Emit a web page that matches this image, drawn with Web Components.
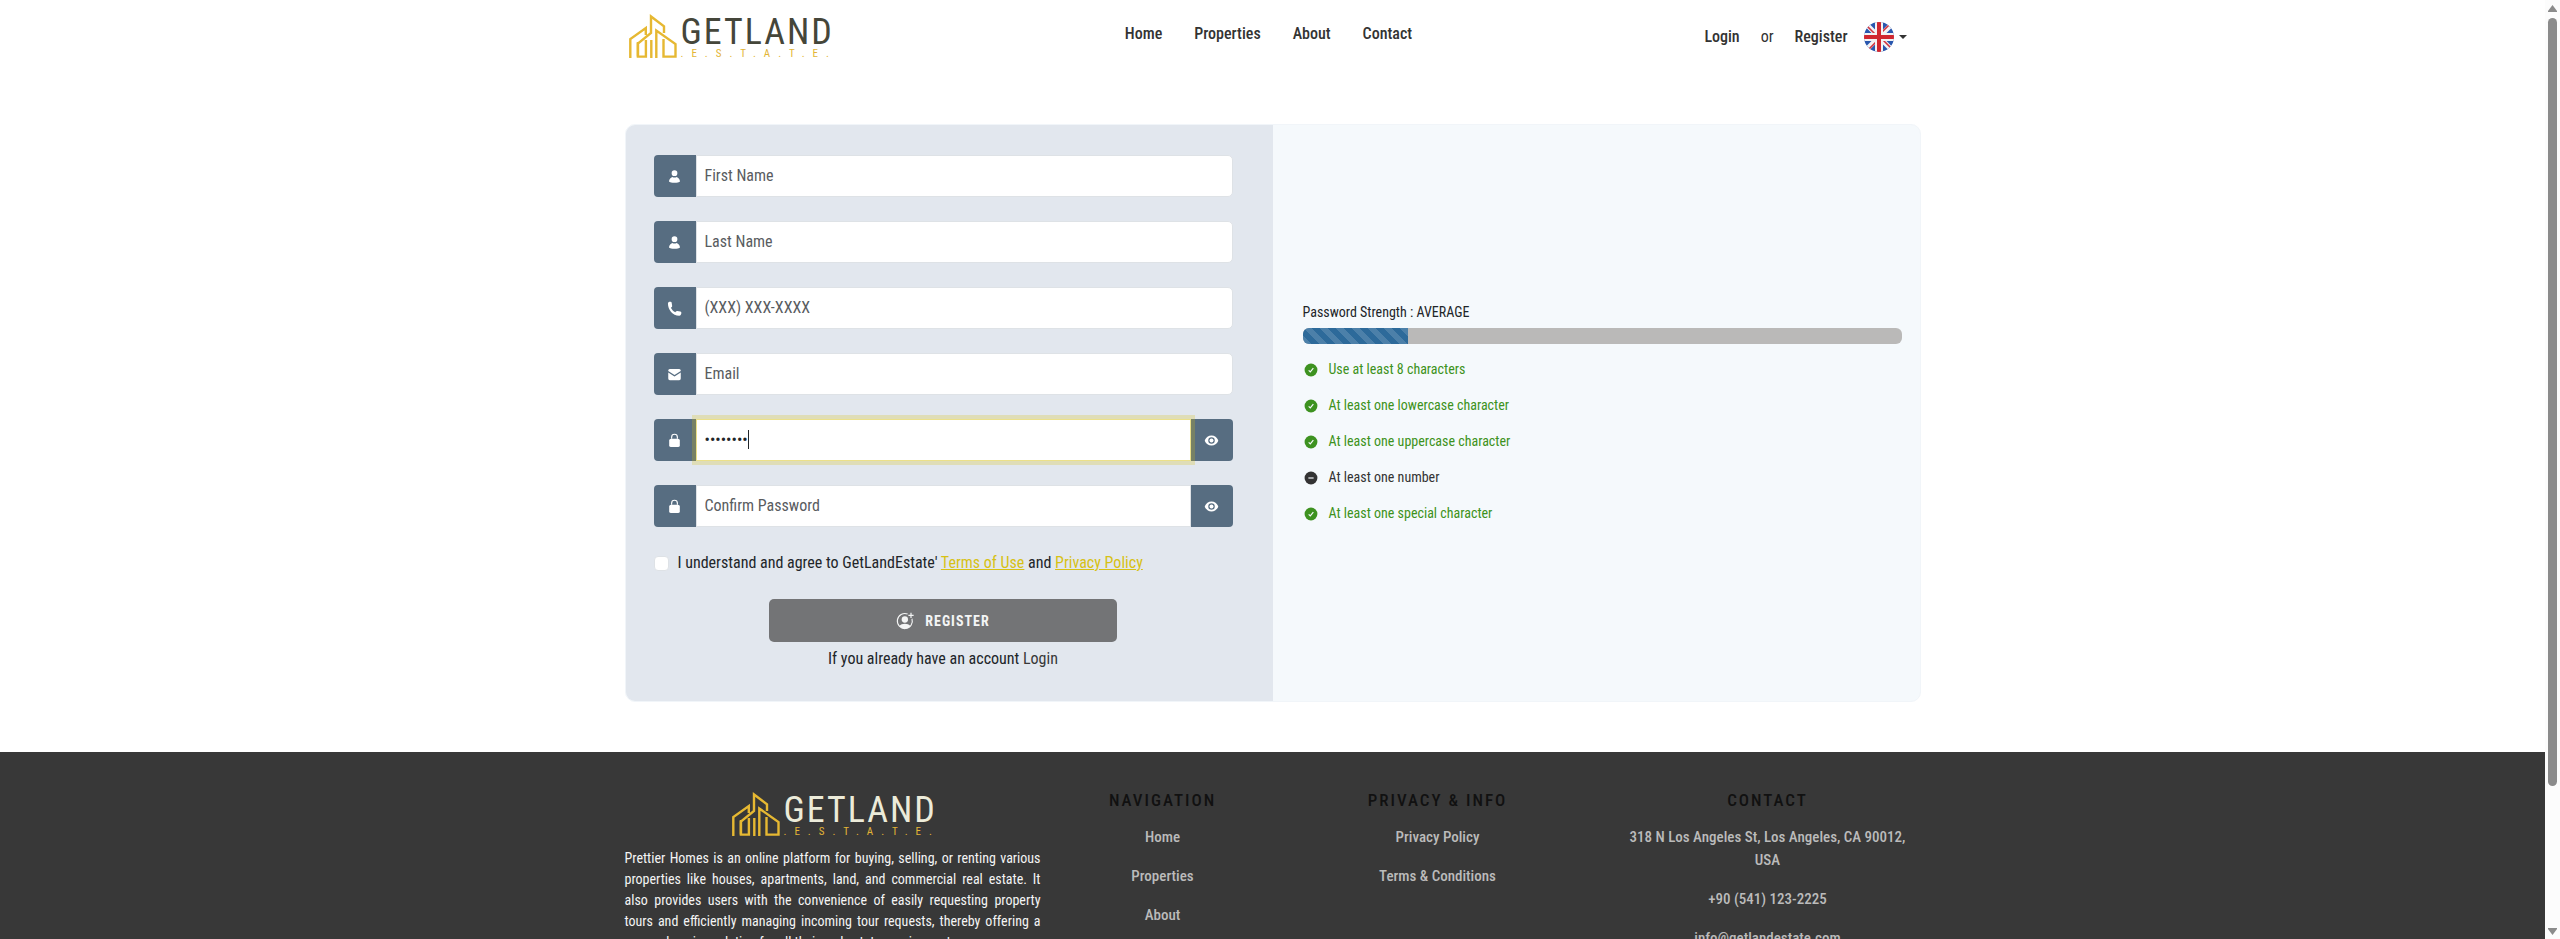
<!DOCTYPE html>
<html lang="en">
<head>
<meta charset="utf-8">
<title>GetLand Estate - Register</title>
<meta name="viewport" content="width=device-width, initial-scale=1">
<style>
  html, body { margin: 0; height: 100%; }
  body {
    font-family: "Roboto Condensed", "Liberation Sans Narrow", Roboto, sans-serif;
    font-size: 16px; line-height: 24px; color: #212529; background: #fff;
  }
</style>
</head>
<body>
<estate-app></estate-app>

<script>
const ICONS = {
  person: '<path d="M12 11.2a4.6 4.6 0 1 0 0-9.2 4.6 4.6 0 0 0 0 9.2zM8.6 12.6C5.400 13.500 3.400 16.500 3.200 20c2 2.800 15.600 2.800 17.600 0-.2-3.500-2.200-6.500-5.400-7.400-2 1.500-4.800 1.500-6.800 0z"/>',
  phone: '<path d="M1.500 3.500C1.500 2 3 1 5 1c1.500 0 2.300.5 2.500 1.800l.7 4.600c.2 1.200-.2 1.900-1 2.500l-1 .8c1.400 3 4.200 5.800 7.200 7.200l.8-1c.6-.8 1.400-1.200 2.500-1l4.600.7c1.200.2 1.700 1 1.700 2.300 0 2.500-1.200 4.600-3.400 4.600C9 23.500 1.500 14 1.500 3.500z"/>',
  mail: '<path d="M4.500 3h15A2.500 2.500 0 0 1 22 5.500v.9l-10 6.400L2 6.400v-.9A2.500 2.500 0 0 1 4.500 3zM2 8.800l9.300 6q.7.4 1.400 0l9.300-6v9.700a2.500 2.500 0 0 1-2.500 2.500h-15A2.500 2.500 0 0 1 2 18.500z"/>',
  lock: '<path d="M7.400 9V6.600a4.600 4.600 0 0 1 9.200 0V9" fill="none" stroke="currentColor" stroke-width="1.800"/><rect x="3.500" y="9" width="17" height="13.500" rx="3"/>',
  eye: '<path fill-rule="evenodd" d="M12 4C7 4 3.300 7.300 1.500 11q-.5 1 0 2C3.300 16.700 7 20 12 20s8.700-3.300 10.500-7q.5-1 0-2C20.700 7.300 17 4 12 4zm0 2.800a5.200 5.200 0 1 1 0 10.400 5.200 5.200 0 0 1 0-10.400z"/><circle cx="12" cy="12" r="3.200"/>',
  check: '<circle cx="12" cy="12" r="11"/><path d="M8 12.500l2.800 2.900L16 8.800" fill="none" stroke="#f5f9fc" stroke-width="2"/>',
  minus: '<circle cx="12" cy="12" r="11"/><path d="M7.500 12h9" fill="none" stroke="#f5f9fc" stroke-width="2"/>',
  userPlus: '<path d="M15.500 2.800A10 10 0 1 0 21.300 9" fill="none" stroke="currentColor" stroke-width="1.500"/><circle cx="11.800" cy="10" r="4.200"/><path d="M4.500 18.500c3-3.600 11.600-3.600 14.600 0-3.500 4.600-11.100 4.600-14.600 0zM19.200 1h1.600v2.700h2.700v1.600h-2.700V8h-1.600V5.300h-2.700V3.700h2.700z"/>'
};

const svgIcon = (name) => `<svg viewBox="0 0 24 24" fill="currentColor" aria-hidden="true">${ICONS[name]}</svg>`;

const define = (tag, render) => customElements.define(tag, class extends HTMLElement {
  constructor() {
    super();
    this.attachShadow({ mode: "open" });
  }
  connectedCallback() {
    this.shadowRoot.innerHTML = `<style>*{box-sizing:border-box} a{color:inherit;text-decoration:none}</style>` + render(this);
  }
});

/* Brand mark: building outline with the two-line wordmark */
define("estate-logo", () => `
  <style>
    :host { display: inline-flex; gap: 4px; color: var(--logo-color, #45463a); height: 44px; font-weight: 400; }
    svg { width: 48px; height: 44px; flex: none; }
    .words { display: flex; flex-direction: column; text-align: left; white-space: nowrap; width: 150px; }
    .name { font-size: 36px; line-height: 36px; letter-spacing: 2px; }
    .sub { font-size: 11px; line-height: 8px; letter-spacing: 8px; color: #e3b536; }
  </style>
  <svg viewBox="0 0 48 44" fill="none" stroke="#e6b832" stroke-width="2.400" aria-hidden="true">
    <path d="M1.300 44V25L16.800 14v7"/>
    <path d="M8.900 42.600V29.500L22 19V2.500L35 12.300V19"/>
    <path d="M8.900 28v14.600h8V26M22.300 26v18M27.300 44V16.500L46.500 30v12.600H34.500V25"/>
  </svg>
  <div class="words"><span class="name">GETLAND</span><span class="sub">.E.S.T.A.T.E.</span></div>
`);

define("estate-header", () => `
  <style>
    :host { display: block; color: #333; font-weight: 500; }
    .bar { max-width: 1320px; margin: 0 auto; padding: 14px 16px 0; display: grid; grid-template-columns: 1fr auto 1fr; align-items: start; }
    .home { display: flex; }
    nav { display: flex; gap: 32px; padding: 8px 8px 0 0; }
    .account { display: flex; justify-content: flex-end; align-items: center; padding: 8px 10px 0 0; gap: 21px; }
    .or { font-weight: 400; }
    .lang { display: flex; align-items: center; gap: 5px; padding: 0; border: 0; background: none; color: inherit; margin-left: -5px; }
    .flag { width: 30px; height: 30px; }
    .caret { border: 4px solid transparent; border-top-color: currentColor; border-bottom: 0; }
  </style>
  <header class="bar">
    <a class="home" href="#"><estate-logo></estate-logo></a>
    <nav><a href="#">Home</a><a href="#">Properties</a><a href="#">About</a><a href="#">Contact</a></nav>
    <div class="account">
      <a href="#">Login</a><span class="or">or</span><a href="#">Register</a>
      <button class="lang" type="button" aria-label="Language">
        <svg class="flag" viewBox="0 0 30 30" aria-hidden="true">
          <clipPath id="round"><circle cx="15" cy="15" r="15"/></clipPath>
          <g clip-path="url(#round)">
            <path fill="#2856ae" d="M0 0h30v30H0z"/>
            <path stroke="#f2f2f4" stroke-width="5" d="M2 2l26 26M28 2L2 28"/>
            <path stroke="#d0333f" stroke-width="1.600" d="M2 3l11 11M27 1L16 12M28 27L17 16M3 29l11-11"/>
            <path stroke="#f2f2f4" stroke-width="8" d="M15 0v30M0 15h30"/>
            <path stroke="#d0262f" stroke-width="4" d="M15 0v30M0 15h30"/>
          </g>
        </svg>
        <span class="caret"></span>
      </button>
    </div>
  </header>
`);

/* Labelled text box with a leading icon; "toggle" adds the show-password button */
define("icon-field", (el) => {
  const secret = el.hasAttribute("toggle");
  const active = el.hasAttribute("active");
  const value = el.getAttribute("value") || "";
  return `
  <style>
    :host { display: block; }
    .row { display: flex; height: 42px; position: relative; }
    label, button { flex: none; width: 42px; display: grid; place-items: center; padding: 0; border: 0; background: #576d81; color: #fff; }
    label { border-radius: 4px 0 0 4px; }
    button { border-radius: 0 4px 4px 0; }
    svg { width: 15px; height: 15px; display: block; }
    .box { flex: 1; display: flex; position: relative; }
    input { flex: 1; min-width: 0; margin: 0; padding: 0 8px; border: 1px solid #dee2e6; border-radius: 0 5px 5px 0; background: #fff; color: #212529; font: inherit; outline: 0; }
    input::placeholder { color: #595c5f; opacity: 1; }
    .secret input { border-radius: 0; }
    .active input { border-color: #ebe08a; box-shadow: 0 0 0 4px rgba(215, 193, 21, .25); }
    .active .box { z-index: 1; }
    .cursor { position: absolute; left: 52px; top: 11px; width: 1px; height: 19px; background: #212529; }
  </style>
  <div class="row ${secret ? "secret" : ""} ${active ? "active" : ""}">
    <label for="f" aria-label="${el.getAttribute("label")}">${svgIcon(el.getAttribute("icon"))}</label>
    <div class="box">
      <input id="f" type="${el.getAttribute("type") || "text"}" placeholder="${el.getAttribute("label")}" value="${value}">
      ${active ? '<span class="cursor"></span>' : ""}
    </div>
    ${secret ? `<button type="button" aria-label="Show password">${svgIcon("eye")}</button>` : ""}
  </div>`;
});

define("register-form", () => `
  <style>
    :host { display: block; background: #e2e7ee; padding: 30px 40px 30px 28px; }
    form { display: flex; flex-direction: column; gap: 24px; margin: 0; }
    .agree { display: flex; align-items: center; gap: 9px; height: 24px; }
    .agree input { appearance: none; width: 15px; height: 15px; margin: 0; background: #fff; border: 1px solid #dee2e6; border-radius: 4px; }
    .agree a { color: #d7c115; text-decoration: underline; }
    .submit { align-self: center; width: 60%; height: 43px; display: flex; align-items: center; justify-content: center; gap: 11px; border: 0; border-radius: 5px; background: #737476; color: #f4f5f5; font: inherit; font-size: 14px; font-weight: 700; letter-spacing: 1px; }
    .submit svg { width: 18px; height: 18px; }
    .login { margin: -19px 0 0; text-align: center; }
    .login a { color: #383838; }
  </style>
  <form>
    <icon-field icon="person" label="First Name"></icon-field>
    <icon-field icon="person" label="Last Name"></icon-field>
    <icon-field icon="phone" label="(XXX) XXX-XXXX" type="tel"></icon-field>
    <icon-field icon="mail" label="Email" type="email"></icon-field>
    <icon-field icon="lock" label="Password" type="password" value="Abcdefg!" toggle active></icon-field>
    <icon-field icon="lock" label="Confirm Password" type="password" toggle></icon-field>
    <div class="agree"><input type="checkbox" id="terms"><label for="terms">I understand and agree to GetLandEstate' <a href="#">Terms of Use</a> and <a href="#">Privacy Policy</a></label></div>
    <button class="submit" type="button">${svgIcon("userPlus")}REGISTER</button>
    <p class="login">If you already have an account <a href="#">Login</a></p>
  </form>
`);

define("strength-rule", (el) => `
  <style>
    :host { display: flex; align-items: center; gap: 11px; color: #3d9220; }
    :host([missing]) { color: #333; }
    svg { width: 14px; height: 14px; }
  </style>
  ${svgIcon(el.hasAttribute("missing") ? "minus" : "check")}<span><slot></slot></span>
`);

define("password-strength", () => `
  <style>
    :host { display: flex; flex-direction: column; justify-content: center; padding: 0 18px 0 30px; font-size: 14px; line-height: 21px; }
    .track { height: 16px; margin: 5px 0 15px; border-radius: 6px; overflow: hidden; background: #bab9b8; }
    .fill { height: 100%; width: 105px; background: linear-gradient(45deg, rgba(255,255,255,.15) 25%, transparent 25%, transparent 50%, rgba(255,255,255,.15) 50%, rgba(255,255,255,.15) 75%, transparent 75%) 0 0 / 16px 16px #2d6a9a; }
    .rules { display: flex; flex-direction: column; gap: 15px; padding-left: 1px; }
  </style>
  <div>Password Strength : AVERAGE</div>
  <div class="track"><div class="fill"></div></div>
  <div class="rules">
    <strength-rule>Use at least 8 characters</strength-rule>
    <strength-rule>At least one lowercase character</strength-rule>
    <strength-rule>At least one uppercase character</strength-rule>
    <strength-rule missing>At least one number</strength-rule>
    <strength-rule>At least one special character</strength-rule>
  </div>
`);

define("register-card", () => `
  <style>
    :host { display: block; max-width: 1320px; margin: 66px auto 50px; padding: 0 12px; }
    .card { display: grid; grid-template-columns: 1fr 1fr; border: 1px solid #f1f5f9; border-radius: 10px; background: #f5f9fc; overflow: hidden; }
  </style>
  <section class="card"><register-form></register-form><password-strength></password-strength></section>
`);

define("estate-footer", () => `
  <style>
    :host { display: block; background: #383838; color: #bbb; font-weight: 500; --logo-color: #ecebd9; }
    .cols { max-width: 1320px; margin: 0 auto; padding: 36px 0 40px; display: grid; grid-template-columns: 4fr 2fr 3fr 3fr; text-align: center; }
    .cols > div { padding: 0 12px; }
    .cols > .contact { padding: 0 24px; }
    .about { padding-top: 4px; }
    .about p { margin: 12px 0 0; font-size: 14px; line-height: 21px; text-align: justify; color: #f4f4f4; font-weight: 400; }
    .about estate-logo { margin-top: 4px; vertical-align: top; }
    h2 { margin: 0 0 14px; font-size: 17px; line-height: 24px; font-weight: 500; letter-spacing: 2px; color: #111; }
    ul { list-style: none; margin: 0; padding: 0; display: flex; flex-direction: column; gap: 16px; line-height: 23px; font-size: 15px; }
  </style>
  <footer class="cols">
    <div class="about"><estate-logo></estate-logo>
      <p>Prettier Homes is an online platform for buying, selling, or renting various properties like houses, apartments, land, and commercial real estate. It also provides users with the convenience of easily requesting property tours and efficiently managing incoming tour requests, thereby offering a comprehensive solution for all their real estate requirements.</p></div>
    <div><h2>NAVIGATION</h2><ul><li><a href="#">Home</a></li><li><a href="#">Properties</a></li><li><a href="#">About</a></li></ul></div>
    <div><h2>PRIVACY &amp; INFO</h2><ul><li><a href="#">Privacy Policy</a></li><li><a href="#">Terms &amp; Conditions</a></li></ul></div>
    <div class="contact"><h2>CONTACT</h2><ul><li><a href="#">318 N Los Angeles St, Los Angeles, CA 90012, USA</a></li><li><a href="#">+90 (541) 123-2225</a></li><li><a href="#">info@getlandestate.com</a></li></ul></div>
  </footer>
`);

define("scroll-rail", () => `
  <style>
    :host { display: flex; flex-direction: column; align-items: center; width: 15px; flex: none; padding: 5px 0 4px; background: #fcfcfc; }
    svg { width: 9px; height: 7px; flex: none; }
    .track { flex: 1; align-self: stretch; margin: 6px 3px; }
    .thumb { height: 85%; width: 9px; border-radius: 5px; background: #8b8b8b; }
  </style>
  <svg viewBox="0 0 9 7" fill="#8b8b8b"><path d="M4.500 0L9 6v1H0V6z"/></svg>
  <div class="track"><div class="thumb"></div></div>
  <svg viewBox="0 0 9 7" fill="#8b8b8b"><path d="M4.500 7L9 1V0H0v1z"/></svg>
`);

define("estate-app", () => `
  <style>
    :host { display: flex; height: 100vh; overflow: hidden; }
    main { flex: 1; min-width: 0; overflow: hidden; }
  </style>
  <main><estate-header></estate-header><register-card></register-card><estate-footer></estate-footer></main>
  <scroll-rail></scroll-rail>
`);
</script>
</body>
</html>
